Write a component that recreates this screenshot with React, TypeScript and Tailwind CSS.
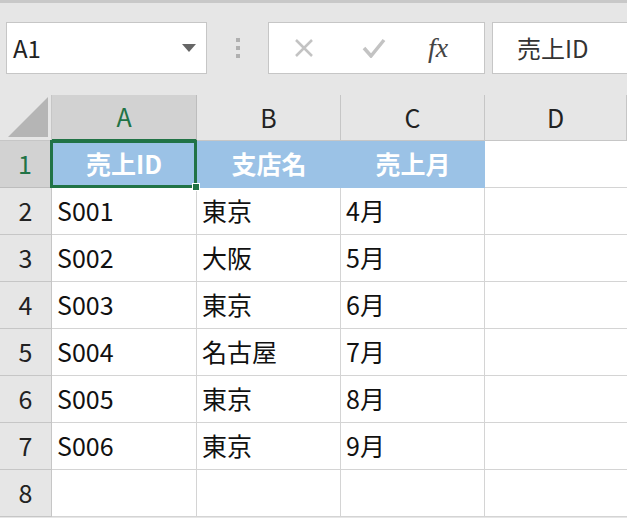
import React from "react";

const font = { fontFamily: '"Noto Sans CJK JP", "Noto Sans", sans-serif' };
const rows = [
  ["S001", "東京", "4月"],
  ["S002", "大阪", "5月"],
  ["S003", "東京", "6月"],
  ["S004", "名古屋", "7月"],
  ["S005", "東京", "8月"],
  ["S006", "東京", "9月"],
  ["", "", ""],
];
const cols = "grid-cols-[52px_145px_144px_144px_142px]";

export default function App() {
  return (
    <div className="w-[627px] h-[518px] bg-[#e6e6e6] overflow-hidden" style={font}>
      <div className="h-[3px] bg-[#c8c8c8]" />
      <div className="flex items-start h-[92px] pt-[19px]">
        <div className="ml-[6px] w-[201px] h-[52px] bg-white border border-[#c6c6c6] flex items-center justify-between pl-[6px] pr-[10px]">
          <span className="text-[24px] text-[#222]">A1</span>
          <svg width="14" height="8" viewBox="0 0 14 8"><path d="M0 0h14L7 8z" fill="#666" /></svg>
        </div>
        <div className="w-[61px] h-[52px] flex flex-col items-center justify-center gap-[4px]">
          <div className="w-[4px] h-[4px] bg-[#b0b0b0]" />
          <div className="w-[4px] h-[4px] bg-[#b0b0b0]" />
          <div className="w-[4px] h-[4px] bg-[#b0b0b0]" />
        </div>
        <div className="w-[217px] h-[52px] bg-white border border-[#c6c6c6] flex items-center">
          <svg className="ml-[25px]" width="20" height="20" viewBox="0 0 20 20"><path d="M2 2L18 18M18 2L2 18" stroke="#c3c3c3" strokeWidth="2.5" /></svg>
          <svg className="ml-[48px]" width="24" height="20" viewBox="0 0 24 20"><path d="M2 10l7 8L22 2" stroke="#c3c3c3" strokeWidth="3.5" fill="none" /></svg>
          <span className="ml-[42px] text-[28px] italic text-[#444]" style={{ fontFamily: '"Liberation Serif", serif' }}>fx</span>
        </div>
        <div className="ml-[7px] flex-1 h-[52px] bg-white border border-[#c6c6c6] border-r-0 flex items-center pl-[24px] text-[24px] text-[#333]">売上ID</div>
      </div>
      <div className={`grid ${cols} h-[46px]`}>
        <div className="bg-[#e6e6e6] border-r border-b border-[#c6c6c6] flex items-end justify-end pr-[3px] pb-[3px]">
          <svg width="40" height="40" viewBox="0 0 40 40"><path d="M40 0V40H0z" fill="#b5b5b5" /></svg>
        </div>
        <div className="bg-[#d2d2d2] border-r border-[#bdbdbd] border-b-[2px] border-b-[#217346] flex items-center justify-center text-[25px] text-[#217346]">A</div>
        {["B", "C", "D"].map((c) => (
          <div key={c} className="border-r border-b border-[#c6c6c6] flex items-center justify-center text-[25px] text-[#222]">{c}</div>
        ))}
      </div>
      <div className={`grid ${cols} h-[47px]`}>
        <div className="bg-[#d2d2d2] border-r-[2px] border-r-[#217346] border-b border-[#bdbdbd] flex items-center justify-center text-[25px] text-[#217346]">1</div>
        <div className="relative bg-[#9bc2e6] border-r border-b border-[#9bc2e6] flex items-center justify-center text-[25px] font-bold text-white">
          売上ID
          <div className="absolute -left-[2px] -top-[1px] -right-[1px] -bottom-[1px] border-[3px] border-[#217346]" />
          <div className="absolute -right-[4px] -bottom-[4px] w-[8px] h-[8px] bg-[#217346] border border-white" />
        </div>
        <div className="bg-[#9bc2e6] border-b border-[#9bc2e6] flex items-center justify-center text-[25px] font-bold text-white">支店名</div>
        <div className="bg-[#9bc2e6] border-b border-[#9bc2e6] flex items-center justify-center text-[25px] font-bold text-white">売上月</div>
        <div className="bg-white border-b border-[#d4d4d4]" />
      </div>
      {rows.map((r, i) => (
        <div key={i} className={`grid ${cols} h-[47px]`}>
          <div className="bg-[#e6e6e6] border-r border-b border-[#c6c6c6] flex items-center justify-center text-[25px] text-[#222]">{i + 2}</div>
          {r.map((v, j) => (
            <div key={j} className="bg-white border-r border-b border-[#d4d4d4] flex items-center pl-[5px] text-[25px] text-[#111]">{v}</div>
          ))}
          <div className="bg-white border-b border-[#d4d4d4]" />
        </div>
      ))}
    </div>
  );
}
